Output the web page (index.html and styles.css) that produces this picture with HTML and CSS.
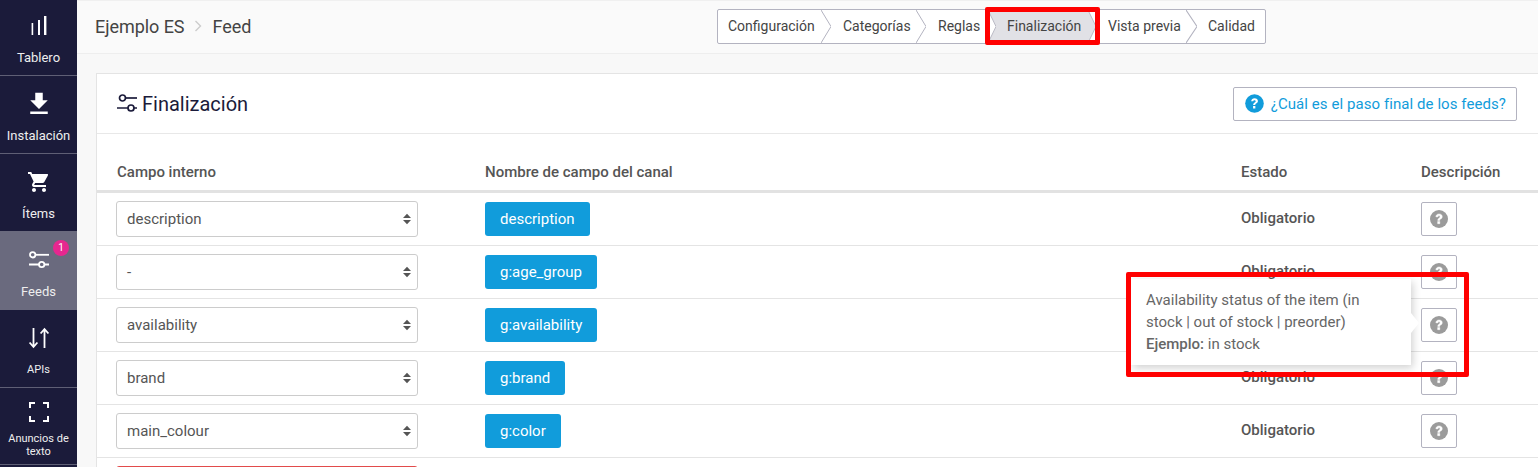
FILE: index.html
```html
<!DOCTYPE html>
<html lang="es">
<head>
<meta charset="utf-8">
<title>Feed</title>
<link rel="stylesheet" href="styles.css">
</head>
<body>
<div class="app">
  <nav class="sidebar">
    <a class="nav-item nav-tablero">
      <svg class="nav-icon" viewBox="-5 -5 30 30"><path d="M2.600 7h1.600v12H2.600zM9 4h2v15H9zM15 0h2.400v19H15z" fill="#fff"/></svg>
      <span class="nav-label">Tablero</span>
    </a>
    <a class="nav-item nav-install">
      <svg class="nav-icon" viewBox="0 0 24 24"><path d="M19 9h-4V3H9v6H5l7 7zM5 18v2h14v-2z" fill="#fff"/></svg>
      <span class="nav-label">Instalación</span>
    </a>
    <a class="nav-item nav-items">
      <svg class="nav-icon" viewBox="-3 -3 30 30"><path d="M7 18c-1.100 0-2 .9-2 2s.9 2 2 2 2-.9 2-2-.9-2-2-2zM1 2v2h2l3.600 7.600-1.350 2.450C4.500 15.370 5.480 17 7 17h12v-2H7.420c-.14 0-.25-.11-.25-.25l.03-.12.9-1.630h7.450c.75 0 1.410-.41 1.750-1.030l3.580-6.490A1 1 0 0 0 20 4H5.210l-.94-2H1zm16 16c-1.100 0-2 .9-2 2s.9 2 2 2 2-.9 2-2-.9-2-2-2z" fill="#fff"/></svg>
      <span class="nav-label">Ítems</span>
    </a>
    <a class="nav-item nav-active">
      <svg class="nav-icon" viewBox="-5 -5 30 30" fill="none" stroke="#fff" stroke-width="1.800"><circle cx="3.700" cy="4.800" r="2.700"/><path d="M6.400 4.800H20"/><circle cx="12.700" cy="14.500" r="2.700"/><path d="M0 14.500h10M15.400 14.500H20"/></svg>
      <span class="nav-label">Feeds</span>
      <span class="badge">1</span>
    </a>
    <a class="nav-item nav-apis">
      <svg class="nav-icon" viewBox="-5 -5 30 30" fill="none" stroke="#fff" stroke-width="1.800"><path d="M4.500 0v19M.6 14.500l3.900 4.500 3.900-4.500M15.500 20V1M11.600 5.500 15.500 1l3.900 4.500"/></svg>
      <span class="nav-label small">APIs</span>
    </a>
    <a class="nav-item nav-ads">
      <svg class="nav-icon" viewBox="-5 -5 30 30" fill="none" stroke="#fff" stroke-width="2"><path d="M1 6V1h5M14 1h5v5M19 14v5h-5M6 19H1v-5"/></svg>
      <span class="nav-label small">Anuncios de texto</span>
    </a>
  </nav>

  <main class="main">
    <header class="topbar">
      <div class="crumbs">
        <span>Ejemplo ES</span>
        <svg class="crumb-sep" viewBox="0 0 8 12" width="8" height="12"><path d="M1.500 1l5 5-5 5" fill="none" stroke="#ccc" stroke-width="1.400"/></svg>
        <span>Feed</span>
      </div>
      <div class="steps">
        <span class="step step-first">Configuración<svg class="chev" viewBox="0 0 10 33" preserveAspectRatio="none"><path d="M0 0l10 16.500L0 33" fill="none" stroke="#b3b3c0"/></svg></span>
        <span class="step step-cat">Categorías<svg class="chev" viewBox="0 0 10 33" preserveAspectRatio="none"><path d="M0 0l10 16.500L0 33" fill="none" stroke="#b3b3c0"/></svg></span>
        <span class="step step-rules">Reglas<svg class="chev chev-s" viewBox="0 0 10 33" preserveAspectRatio="none"><path d="M0 0l10 16.500L0 33" fill="none" stroke="#b3b3c0"/></svg></span>
        <span class="step step-on">Finalización<svg class="chev chev-s" viewBox="0 0 10 33" preserveAspectRatio="none"><path d="M0 0l10 16.500L0 33" fill="none" stroke="#b3b3c0"/></svg></span>
        <span class="step step-view">Vista previa<svg class="chev chev-l" viewBox="0 0 10 33" preserveAspectRatio="none"><path d="M0 0l10 16.500L0 33" fill="none" stroke="#b3b3c0"/></svg></span>
        <span class="step step-last">Calidad</span>
      </div>
    </header>

    <section class="card">
      <div class="card-head">
        <h1 class="card-title">
          <svg viewBox="0 0 22 20" width="22" height="20" fill="none" stroke="#1b1b3a" stroke-width="1.700"><circle cx="6.500" cy="4" r="3"/><path d="M9.500 4H21"/><circle cx="15" cy="14" r="3"/><path d="M1 14h11M18 14h3"/></svg>
          Finalización
        </h1>
        <a class="help-link">
          <svg viewBox="0 0 20 20" width="19" height="19"><circle cx="10" cy="10" r="9.800" fill="#119cdb"/><path d="M6.500 7.500C6.700 5.500 8.100 4.400 10.100 4.400c2.100 0 3.500 1.200 3.500 3 0 1.400-.8 2.100-1.800 2.700-.8.500-1 .8-1 1.500H8.600c0-1.300.4-1.900 1.300-2.500.9-.6 1.300-.9 1.300-1.500 0-.7-.5-1.100-1.200-1.100-.8 0-1.300.5-1.400 1.200zM8.500 12.700h2.400v2.500H8.500z" fill="#fff"/></svg>
          ¿Cuál es el paso final de los feeds?
        </a>
      </div>

      <div class="table-row table-head">
        <div class="c1 head-first">Campo interno</div>
        <div>Nombre de campo del canal</div>
        <div>Estado</div>
        <div>Descripción</div>
      </div>

      <div class="table-row">
        <div class="c1"><div class="select">description<svg class="updown" viewBox="0 0 9 12" width="8" height="12"><path d="M4.500 0 9 5H0zM0 7h9l-4.500 5z" fill="#555"/></svg></div></div>
        <div><span class="tag">description</span></div>
        <div class="status">Obligatorio</div>
        <div><span class="q-btn"><svg viewBox="0 0 20 20" width="18" height="18"><circle cx="10" cy="10" r="10" fill="#9b9b9b"/><path d="M6.500 7.500C6.700 5.500 8.100 4.400 10.100 4.400c2.100 0 3.500 1.200 3.500 3 0 1.400-.8 2.100-1.800 2.700-.8.500-1 .8-1 1.500H8.600c0-1.300.4-1.900 1.300-2.500.9-.6 1.300-.9 1.300-1.500 0-.7-.5-1.100-1.200-1.100-.8 0-1.300.5-1.400 1.200zM8.500 12.700h2.400v2.500H8.500z" fill="#fff"/></svg></span></div>
      </div>
      <div class="table-row">
        <div class="c1"><div class="select">-<svg class="updown" viewBox="0 0 9 12" width="8" height="12"><path d="M4.500 0 9 5H0zM0 7h9l-4.500 5z" fill="#555"/></svg></div></div>
        <div><span class="tag">g:age_group</span></div>
        <div class="status">Obligatorio</div>
        <div><span class="q-btn"><svg viewBox="0 0 20 20" width="18" height="18"><circle cx="10" cy="10" r="10" fill="#9b9b9b"/><path d="M6.500 7.500C6.700 5.500 8.100 4.400 10.100 4.400c2.100 0 3.500 1.200 3.500 3 0 1.400-.8 2.100-1.800 2.700-.8.500-1 .8-1 1.500H8.600c0-1.300.4-1.900 1.300-2.500.9-.6 1.300-.9 1.300-1.500 0-.7-.5-1.100-1.200-1.100-.8 0-1.300.5-1.400 1.200zM8.500 12.700h2.400v2.500H8.500z" fill="#fff"/></svg></span></div>
      </div>
      <div class="table-row">
        <div class="c1"><div class="select">availability<svg class="updown" viewBox="0 0 9 12" width="8" height="12"><path d="M4.500 0 9 5H0zM0 7h9l-4.500 5z" fill="#555"/></svg></div></div>
        <div><span class="tag">g:availability</span></div>
        <div class="status">Obligatorio</div>
        <div class="tip-anchor"><span class="q-btn"><svg viewBox="0 0 20 20" width="18" height="18"><circle cx="10" cy="10" r="10" fill="#9b9b9b"/><path d="M6.500 7.500C6.700 5.500 8.100 4.400 10.100 4.400c2.100 0 3.500 1.200 3.500 3 0 1.400-.8 2.100-1.800 2.700-.8.500-1 .8-1 1.500H8.600c0-1.300.4-1.900 1.300-2.500.9-.6 1.300-.9 1.300-1.500 0-.7-.5-1.100-1.200-1.100-.8 0-1.300.5-1.400 1.200zM8.500 12.700h2.400v2.500H8.500z" fill="#fff"/></svg></span>
          <div class="tooltip">Availability status of the item (in stock | out of stock | preorder)<br><b>Ejemplo:</b> in stock</div>
        </div>
      </div>
      <div class="table-row">
        <div class="c1"><div class="select">brand<svg class="updown" viewBox="0 0 9 12" width="8" height="12"><path d="M4.500 0 9 5H0zM0 7h9l-4.500 5z" fill="#555"/></svg></div></div>
        <div><span class="tag">g:brand</span></div>
        <div class="status">Obligatorio</div>
        <div><span class="q-btn"><svg viewBox="0 0 20 20" width="18" height="18"><circle cx="10" cy="10" r="10" fill="#9b9b9b"/><path d="M6.500 7.500C6.700 5.500 8.100 4.400 10.100 4.400c2.100 0 3.500 1.200 3.500 3 0 1.400-.8 2.100-1.800 2.700-.8.500-1 .8-1 1.500H8.600c0-1.300.4-1.900 1.300-2.500.9-.6 1.300-.9 1.300-1.500 0-.7-.5-1.100-1.200-1.100-.8 0-1.300.5-1.400 1.200zM8.500 12.700h2.400v2.500H8.500z" fill="#fff"/></svg></span></div>
      </div>
      <div class="table-row">
        <div class="c1"><div class="select">main_colour<svg class="updown" viewBox="0 0 9 12" width="8" height="12"><path d="M4.500 0 9 5H0zM0 7h9l-4.500 5z" fill="#555"/></svg></div></div>
        <div><span class="tag">g:color</span></div>
        <div class="status">Obligatorio</div>
        <div><span class="q-btn"><svg viewBox="0 0 20 20" width="18" height="18"><circle cx="10" cy="10" r="10" fill="#9b9b9b"/><path d="M6.500 7.500C6.700 5.500 8.100 4.400 10.100 4.400c2.100 0 3.500 1.200 3.500 3 0 1.400-.8 2.100-1.800 2.700-.8.500-1 .8-1 1.500H8.600c0-1.300.4-1.900 1.300-2.500.9-.6 1.300-.9 1.300-1.500 0-.7-.5-1.100-1.200-1.100-.8 0-1.300.5-1.400 1.200zM8.500 12.700h2.400v2.500H8.500z" fill="#fff"/></svg></span></div>
      </div>
      <div class="table-row">
        <div class="c1"><div class="select select-error"></div></div>
      </div>
    </section>
  </main>
</div>
<div class="mark mark-steps"></div>
<div class="mark mark-tip"></div>
</body>
</html>
```
FILE: styles.css
```css
* { box-sizing: border-box; }
html, body { margin: 0; height: 467px; overflow: hidden; }
body { font-family: Roboto, "Liberation Sans", sans-serif; color: #555; background: #f8f8f8; position: relative; }
.app { display: flex; height: 467px; }

.sidebar { width: 77px; flex: none; background: #1b1b3a; display: flex; flex-direction: column; color: #fff; }
.nav-item { position: relative; display: flex; flex-direction: column; align-items: center; border-bottom: 1px solid #5f5f75; flex: none; }
.nav-tablero { height: 76px; padding-top: 11px; }
.nav-install { height: 78px; padding-top: 13px; }
.nav-items { height: 77px; padding-top: 13px; border-bottom: 0; }
.nav-active { height: 79px; padding-top: 14px; background: #6a6a7e; border-bottom: 0; }
.nav-apis { height: 78px; padding-top: 13px; }
.nav-ads { height: 77px; padding-top: 9px; }
.nav-icon { display: block; flex: none; width: 30px; height: 30px; }
.nav-label { font-size: 13px; line-height: 13px; margin-top: 10px; text-align: center; color: #eee; }
.nav-label.small { font-size: 11px; line-height: 13px; padding: 0 5px; }
.nav-ads .nav-label { margin-top: 5px; }
.badge { position: absolute; top: 9px; right: 8px; width: 16px; height: 16px; border-radius: 50%; background: #e6278f; color: #fff; font-size: 10px; line-height: 16px; text-align: center; }

.main { flex: 1; min-width: 0; display: flex; flex-direction: column; }
.topbar { height: 54px; flex: none; background: #fafafa; border-top: 1px solid #f0f0f0; border-bottom: 1px solid #eee; display: flex; align-items: center; position: relative; padding: 0 0 2px 18px; }
.crumbs { display: flex; align-items: center; font-size: 18px; letter-spacing: -.05px; color: #444; }
.crumb-sep { margin: 0 11px 0 9px; }
.steps { position: absolute; left: 640px; top: 8px; width: 549px; height: 35px; display: flex; align-items: stretch; border: 1px solid #b3b3c0; border-radius: 2px; background: #fff; isolation: isolate; }
.step { position: relative; display: flex; align-items: center; padding: 0 0 1px 22px; font-size: 14px; color: #444; flex: none; }
.step-first { width: 103px; padding-left: 10px; }
.step-cat { width: 95px; }
.step-rules { width: 72px; }
.step-on { width: 100px; padding-left: 19px; }
.step-on::before { content: ""; position: absolute; z-index: -1; left: 0; top: 0; bottom: 0; width: 108px; background: #e1e1e6; clip-path: polygon(0 0, 100px 0, 108px 50%, 100px 100%, 0 100%, 8px 50%); }
.step-view { width: 98px; padding-left: 20px; }
.step-last { flex: 1; }
.chev { position: absolute; left: 100%; top: 0; width: 10px; height: 33px; }
.chev-s { width: 8px; }
.chev-l { width: 11px; }

.card { margin: 19px -4px 0 19px; background: #fff; border: 1px solid #e4e4e4; border-bottom: 0; flex: 1; overflow: hidden; }
.card-head { height: 60px; border-bottom: 1px solid #e8e8e8; display: flex; align-items: center; justify-content: space-between; padding: 0 24px 0 19px; }
.card-title { margin: 0; font-size: 20px; font-weight: 400; color: #1b1b3a; display: flex; align-items: center; gap: 4px; }
.help-link { height: 34px; display: flex; align-items: center; gap: 7px; padding: 0 10px 0 11px; border: 1px solid #b3b3c0; border-radius: 2px; font-size: 15px; letter-spacing: .07px; color: #119cdb; white-space: nowrap; }

.table-row { display: grid; grid-template-columns: 388px 756px 180px 1fr; height: 53px; align-items: center; border-bottom: 1px solid #e4e4e4; }
.table-row > .c1 { padding-left: 19px; }
.table-row > .head-first { padding-left: 20px; }
.table-head { height: 59px; border-bottom: 3px solid #e2e2e2; font-size: 15px; font-weight: 500; padding-top: 20px; color: #555; }
.select { width: 302px; height: 36px; border: 1px solid #ccc; border-radius: 3px; padding: 0 6px 0 10px; font-size: 15px; display: flex; align-items: center; justify-content: space-between; background: #fff; }
.select-error { border-color: #e24b4b; }
.updown { flex: none; }
.tag { display: inline-flex; height: 34px; align-items: center; padding: 0 15px; background: #119cdb; color: #fff; border-radius: 3px; font-size: 15px; vertical-align: middle; }
.status { font-size: 15px; font-weight: 500; padding-bottom: 2px; }
.q-btn { display: inline-flex; width: 36px; height: 34px; align-items: center; justify-content: center; border: 1px solid #b3b3c0; border-radius: 2px; vertical-align: middle; background: #fff; }
.q-btn path { stroke: #fff; stroke-width: .5; }
.tip-anchor { position: relative; }
.tooltip { position: absolute; right: calc(100% + 10px); top: -29px; width: 280px; height: 86px; background: #fff; padding: 10px 15px; font-size: 15px; line-height: 22px; color: #666; box-shadow: 2px 3px 8px rgba(0,0,0,.18); z-index: 5; }
.tooltip b { font-weight: 500; }
.tooltip::after { content: ""; position: absolute; right: -8px; top: 34px; border-left: 8px solid #fff; border-top: 10px solid transparent; border-bottom: 10px solid transparent; }

.mark { position: absolute; border: 5px solid #f00; border-radius: 2px; z-index: 10; pointer-events: none; }
.mark-steps { left: 985px; top: 7px; width: 115px; height: 38px; }
.mark-tip { left: 1126px; top: 272px; width: 343px; height: 105px; }
```
